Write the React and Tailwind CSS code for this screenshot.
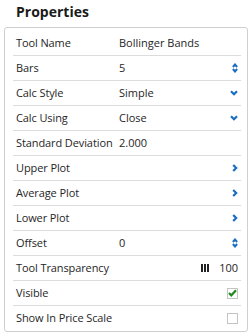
import React from "react";

const SortIcon = () => (
  <svg width="6" height="10" viewBox="0 0 6 10" className="text-[#1a6dc0]">
    <polyline points="0.9,4 3,1.5 5.1,4" fill="none" stroke="currentColor" strokeWidth="2" />
    <polyline points="0.9,6 3,8.5 5.1,6" fill="none" stroke="currentColor" strokeWidth="2" />
  </svg>
);

const ChevronDown = () => (
  <svg width="8" height="6" viewBox="0 0 8 6" className="text-[#1a6dc0]">
    <polyline points="1,1.2 4,4.2 7,1.2" fill="none" stroke="currentColor" strokeWidth="2.2" />
  </svg>
);

const ChevronRight = () => (
  <svg width="6" height="8" viewBox="0 0 6 8" className="text-[#1a6dc0]">
    <polyline points="1.2,1 4.2,4 1.2,7" fill="none" stroke="currentColor" strokeWidth="2.2" />
  </svg>
);

const Bars = () => (
  <svg width="8" height="8" viewBox="0 0 8 8" className="text-[#222]">
    <rect x="0" y="0" width="2" height="8" fill="currentColor" />
    <rect x="3" y="0" width="2" height="8" fill="currentColor" />
    <rect x="6" y="0" width="2" height="8" fill="currentColor" />
  </svg>
);

const Checkbox = ({ checked }) => (
  <div className="w-[11px] h-[11px] border border-[#c4c4c4] bg-white flex items-center justify-center">
    {checked && (
      <svg width="9" height="8" viewBox="0 0 9 8">
        <polyline points="1,4 3.3,6.3 8,1.3" fill="none" stroke="#1f8a1f" strokeWidth="2.2" />
      </svg>
    )}
  </div>
);

const rows = [
  { label: "Tool Name", value: "Bollinger Bands" },
  { label: "Bars", value: "5", icon: <SortIcon /> },
  { label: "Calc Style", value: "Simple", icon: <ChevronDown /> },
  { label: "Calc Using", value: "Close", icon: <ChevronDown /> },
  { label: "Standard Deviation", value: "2.000" },
  { label: "Upper Plot", icon: <ChevronRight /> },
  { label: "Average Plot", icon: <ChevronRight /> },
  { label: "Lower Plot", icon: <ChevronRight /> },
  { label: "Offset", value: "0", icon: <SortIcon /> },
  {
    label: "Tool Transparency",
    icon: (
      <div className="flex items-center gap-[10px]">
        <Bars />
        <span>100</span>
      </div>
    ),
  },
  { label: "Visible", icon: <Checkbox checked /> },
  { label: "Show In Price Scale", icon: <Checkbox /> },
];

export default function App() {
  return (
    <div className="w-[252px] h-[336px] bg-white font-['Open_Sans',sans-serif] text-[#262626]">
      <div className="h-[27px] pl-4 pt-[2px] text-[14px] leading-[20px] font-bold text-[#1a1a1a]">
        Properties
      </div>
      <div className="ml-1 w-[244px] border border-[#cfcfcf] rounded-[3px] pt-[3px] pl-2 pr-[6px]">
        {rows.map((r, i) => (
          <div
            key={r.label}
            className={
              "flex items-center h-[25px] px-[3px] text-[11px] " +
              (i < rows.length - 1 ? "border-b border-[#dcdcdc]" : "")
            }
          >
            <div className="w-[103px] shrink-0 whitespace-nowrap tracking-[-0.1px]">{r.label}</div>
            <div className="flex-1 whitespace-nowrap">{r.value}</div>
            {r.icon && <div className="flex items-center">{r.icon}</div>}
          </div>
        ))}
      </div>
    </div>
  );
}
